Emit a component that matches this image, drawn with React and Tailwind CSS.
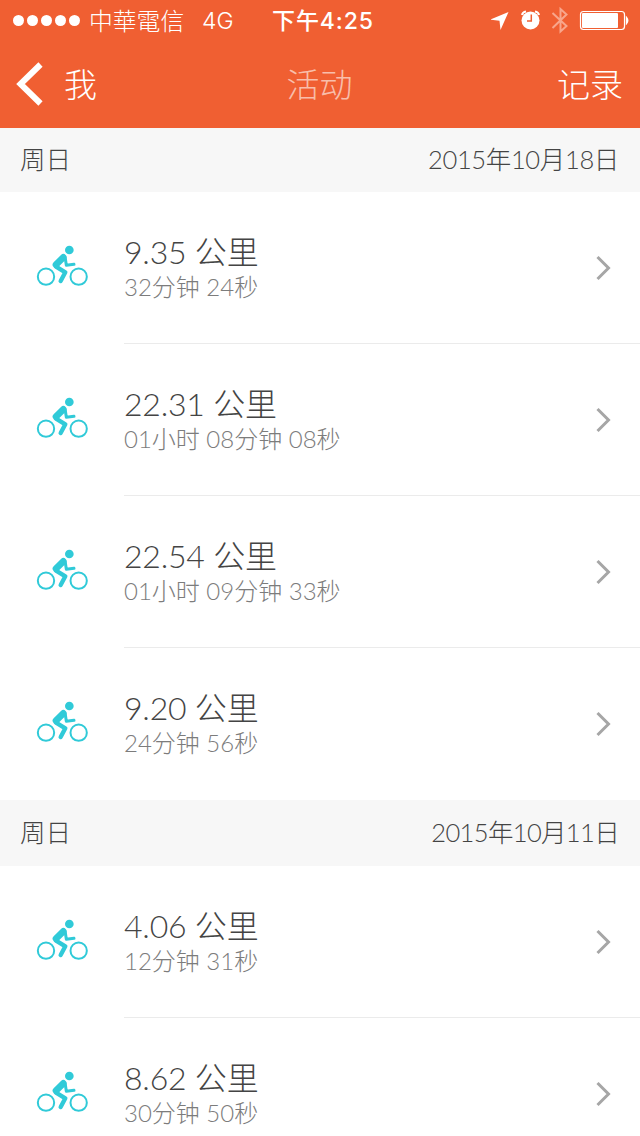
import React from 'react'

const days = [
  {
    weekday: '周日',
    date: '2015年10月18日',
    headerClass: 'h-16',
    dateClass: 'tracking-[-0.35px]',
    activities: [
      { distance: '9.35', time: '32分钟 24秒' },
      { distance: '22.31', time: '01小时 08分钟 08秒' },
      { distance: '22.54', time: '01小时 09分钟 33秒' },
      { distance: '9.20', time: '24分钟 56秒' },
    ],
  },
  {
    weekday: '周日',
    date: '2015年10月11日',
    headerClass: 'h-[66px]',
    dateClass: 'tracking-[-0.65px]',
    activities: [
      { distance: '4.06', time: '12分钟 31秒' },
      { distance: '8.62', time: '30分钟 50秒' },
    ],
  },
]

const BikeIcon = () => (
  <svg viewBox="0 0 156 129" className="w-[52px] h-[43px] shrink-0" fill="none">
    <g stroke="#30cad8" strokeLinecap="round" strokeLinejoin="round">
      <circle cx="30" cy="98" r="24.5" strokeWidth="6" />
      <circle cx="128" cy="98" r="24.5" strokeWidth="6" />
      <path d="M60 68 L88 85 L74 111" strokeWidth="13" />
      <path d="M88 44 L91 64 L114 61" strokeWidth="9" />
      <path d="M82 40 L60 62" strokeWidth="20" />
    </g>
    <circle cx="100" cy="18" r="13" fill="#30cad8" />
  </svg>
)

const StatusBar = () => (
  <div className="flex items-center h-10 pl-[13px] pr-[11px] text-white">
    <div className="flex gap-[3px]">
      {[0, 1, 2, 3, 4].map((i) => (
        <span key={i} className="w-[11px] h-[11px] rounded-full bg-white" />
      ))}
    </div>
    <span className="ml-[9px] w-[113px] pt-0.5 text-[23.8px] leading-[38px] whitespace-nowrap font-light font-['Lato','Noto_Sans_CJK_TC',sans-serif]">中華電信</span>
    <span className="w-[70px] pt-0.5 text-[23px] leading-[38px] font-light font-['Inter',sans-serif]">4G</span>
    <span className="pt-0.5 text-[23px] leading-[38px] font-medium tracking-[0.9px] whitespace-nowrap font-['Inter','Noto_Sans_CJK_TC',sans-serif]">下午4:25</span>
    <svg viewBox="0 0 138 40" className="w-[138px] h-10 ml-auto shrink-0">
      <path d="M-1 19.7 L17.5 12 L9.5 30 L8.5 20.8 Z" fill="#fff" />
      <circle cx="39.5" cy="20.5" r="9" fill="#fff" />
      <path d="M31 15 Q31.5 12 35 11.5 M44 11.5 Q47.5 12 48 15" stroke="#fff" strokeWidth="2" fill="none" />
      <path d="M40.3 14.5 V21 H36" stroke="#f05f32" strokeWidth="1.5" fill="none" />
      <path d="M61.5 13 L75.5 26 L69.5 31.5 V9 L75.5 14.5 L61.5 28" stroke="#f8a68c" strokeWidth="2" fill="none" />
      <rect x="89.5" y="11.5" width="44" height="18" rx="3" stroke="#fff" strokeWidth="1.2" fill="none" />
      <rect x="91" y="13" width="36" height="15" rx="1" fill="#fff" />
      <path d="M135.5 17.5 Q138 20.5 135.5 23.5 Z" stroke="#fff" strokeWidth="1.4" fill="#fff" />
    </svg>
  </div>
)

const NavBar = () => (
  <div className="grid grid-cols-3 items-center h-[88px] pl-4 pr-[17px] text-[33px] font-light text-white">
    <div className="flex items-center">
      <svg viewBox="0 0 27 44" className="w-[27px] h-11" fill="none">
        <path d="M24.5 2.5 L4.5 22 L24.5 41.5" stroke="#fff" strokeWidth="6" />
      </svg>
      <span className="ml-[21px] pt-0.5">我</span>
    </div>
    <h1 className="pt-0.5 text-center text-white/60">活动</h1>
    <span className="pt-0.5 text-right">记录</span>
  </div>
)

const DayHeader = ({ day }) => (
  <div className={`flex items-center justify-between pl-5 pr-[21px] pb-0.5 bg-[#f7f7f7] text-[25.5px] font-light text-[#444] ${day.headerClass}`}>
    <span>{day.weekday}</span>
    <span className={day.dateClass}>{day.date}</span>
  </div>
)

const ActivityRow = ({ activity, last }) => (
  <div className="flex h-[152px] pl-9">
    <div className="flex items-center w-[88px] pb-[5px]">
      <BikeIcon />
    </div>
    <div className={`flex flex-1 items-center justify-between pr-7 ${last ? '' : 'border-b border-[#ebebeb]'}`}>
      <div className="whitespace-nowrap font-light">
        <div className="text-[32px] leading-[38px] tracking-[-0.2px] text-[#444]">{activity.distance} 公里</div>
        <div className="text-[24px] leading-[32px] text-[#7c7c7c]">{activity.time}</div>
      </div>
      <svg viewBox="0 0 16 26" className="w-4 h-[26px]" fill="none">
        <path d="M1.5 2 L12.5 13 L1.5 24" stroke="#a6a6a6" strokeWidth="3" />
      </svg>
    </div>
  </div>
)

const App = () => {
  return (
    <div className="w-[640px] h-[1136px] overflow-hidden bg-white font-['Lato','Noto_Sans_CJK_SC',sans-serif]">
      <header className="bg-[#f05f32]">
        <StatusBar />
        <NavBar />
      </header>
      {days.map((day, i) => (
        <section key={i}>
          <DayHeader day={day} />
          {day.activities.map((activity, j) => (
            <ActivityRow key={j} activity={activity} last={j === day.activities.length - 1} />
          ))}
        </section>
      ))}
    </div>
  )
}

export default App
